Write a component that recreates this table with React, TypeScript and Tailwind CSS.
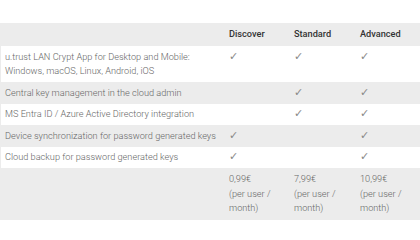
const plans = ["Discover", "Standard", "Advanced"];

const features: { label: string[]; checks: boolean[] }[] = [
  {
    label: ["u.trust LAN Crypt App for Desktop and Mobile:", "Windows, macOS, Linux, Android, iOS"],
    checks: [true, true, true],
  },
  { label: ["Central key management in the cloud admin"], checks: [false, true, true] },
  { label: ["MS Entra ID / Azure Active Directory integration"], checks: [false, true, true] },
  { label: ["Device synchronization for password generated keys"], checks: [true, false, true] },
  { label: ["Cloud backup for password generated keys"], checks: [true, false, true] },
];

const prices = ["0,99€", "7,99€", "10,99€"];

const grid = "grid grid-cols-[223px_65px_66px_66px]";

export default function App() {
  return (
    <div className="h-[240px] w-[420px] bg-white pt-[23px] font-['Roboto',sans-serif] text-[9.2px] font-light leading-[14.5px] text-[#666]">
      <div className="border-l border-[#ececec]">
        {/* Header */}
        <div className={`${grid} h-[23px] items-center bg-[#ececec]`}>
          <div />
          {plans.map((p) => (
            <div key={p} className="px-[5px] font-medium text-[#333]">
              {p}
            </div>
          ))}
        </div>

        {/* Feature rows */}
        {features.map((f, i) => (
          <div
            key={i}
            className={`${grid} py-[3.5px] ${i % 2 === 1 ? "bg-[#ececec]" : "bg-white"}`}
          >
            <div className="px-[4px]">
              {f.label.map((l) => (
                <div key={l} className="whitespace-nowrap">
                  {l}
                </div>
              ))}
            </div>
            {f.checks.map((c, j) => (
              <div key={j} className="px-[5px] text-[11px] text-[#888]">
                {c ? "✓" : ""}
              </div>
            ))}
          </div>
        ))}

        {/* Prices */}
        <div className={`${grid} bg-[#ececec] py-[4px]`}>
          <div />
          {prices.map((p) => (
            <div key={p} className="px-[5px]">
              <div>{p}</div>
              <div>(per user /</div>
              <div>month)</div>
            </div>
          ))}
        </div>
      </div>
    </div>
  );
}
